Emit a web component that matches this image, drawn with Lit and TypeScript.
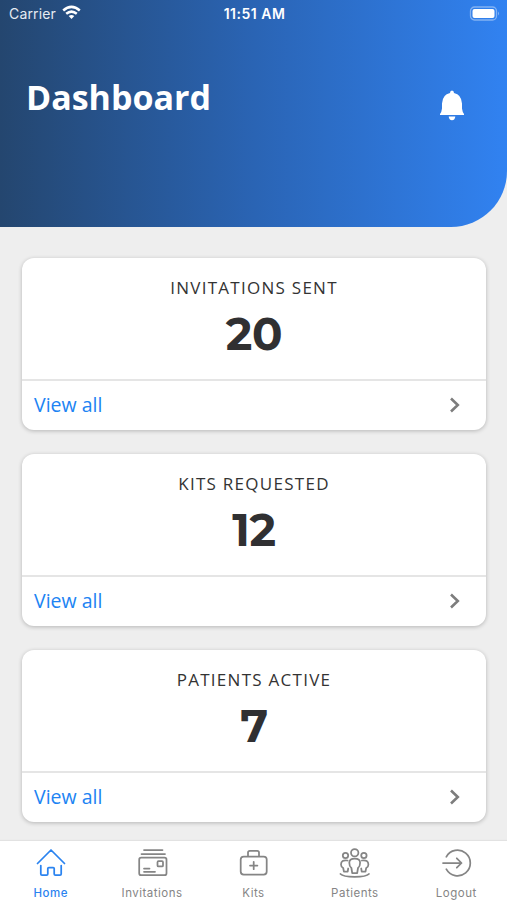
import { LitElement, html, css, svg } from "lit";
import { customElement, property } from "lit/decorators.js";

const icons: Record<string, unknown> = {
  Home: svg`<path d="M2.500 15.500 16 2 29.500 15.500M5.800 17.500V26q0 1.200 1.200 1.200H11.600q1.200 0 1.200-1.200V20.500q0-1 1-1h4.400q1 0 1 1V26q0 1.200 1.200 1.200H25q1.200 0 1.200-1.200V17.500"/>`,
  Invitations: svg`<path d="M7 2H25.500M4.500 6H28"/><rect x="2.200" y="9.700" width="27.300" height="17.500" rx="2"/><rect x="20.500" y="13.200" width="5.500" height="5.200" rx="1"/><path d="M7 20.600H12.500M7 23.800H18"/>`,
  Kits: svg`<rect x="2.700" y="8.500" width="26" height="18" rx="3"/><path d="M10 8V4.600Q10 2.800 11.800 2.800H19.200Q21 2.800 21 4.600V8M15.700 13.800V21.200M12 17.500H19.400"/>`,
  Patients: svg`<circle cx="15.700" cy="4.700" r="3.700"/><circle cx="6.500" cy="7.500" r="2.700"/><circle cx="24.900" cy="7.500" r="2.700"/><path d="M13.200 25 12.400 20Q10.300 18.500 10.300 14.700 10.300 10.700 15.700 10.700T21.100 14.700Q21.100 18.500 19 20L18.200 25ZM8.500 12.500Q2 11.500 2 16.500 2 19 4.200 20L4.900 23.500H8.700L9.200 20.500M22.900 12.500Q29.400 11.500 29.400 16.500 29.400 19 27.200 20L26.500 23.500H22.700L22.200 20.500M1.500 26Q4 28.800 15.700 28.800T29.900 26"/>`,
  Logout: svg`<path d="M5.300 8.800A12.800 12.800 0 1 1 5.300 21.200M2 15H20.500M15.800 10.300 20.500 15 15.800 19.700"/>`,
};

@customElement("stat-card")
class StatCard extends LitElement {
  @property() label = "";
  @property() value = "";
  static styles = css`
    :host { display: flex; flex-direction: column; height: 172px; border-radius: 12px; background: #fff; box-shadow: 0 1px 4px rgba(0,0,0,.24); font-family: "Open Sans", "Noto Sans", sans-serif; overflow: hidden; }
    .summary { box-sizing: border-box; height: 123px; padding-top: 18px; border-bottom: 2px solid #e5e5e5; text-align: center; color: #333; }
    .label { font-size: 17px; line-height: 24px; letter-spacing: 1.27px; }
    .value { font: 700 45px/52px Montserrat, Inter, sans-serif; margin-top: 8px; color: #303032; letter-spacing: -.3px; }
    .more { flex: 1; display: flex; align-items: center; justify-content: space-between; padding: 0 25px 2px 12px; color: #2083f3; font-size: 19.500px; }
    svg { width: 12px; height: 18px; fill: none; stroke: #7d7d7d; stroke-width: 2.600; }
  `;
  render() {
    return html`<div class="summary"><div class="label">${this.label}</div><div class="value">${this.value}</div></div>
      <div class="more"><span>View all</span><svg viewBox="0 0 12 18"><path d="M2 2.500 8.800 9 2 15.500"/></svg></div>`;
  }
}

@customElement("app-root")
class AppRoot extends LitElement {
  static styles = css`
    :host { display: flex; flex-direction: column; height: 900px; background: #eee; font-family: "Open Sans", "Noto Sans", sans-serif; overflow: hidden; }
    header { height: 227px; flex: none; background: linear-gradient(90deg, #24466f, #2a64b4 50%, #3182f1); border-bottom-right-radius: 56px; color: #fff; }
    .status { display: grid; grid-template-columns: 1fr auto 1fr; align-items: center; height: 27px; padding: 0 7px 0 9px; font: 500 14px/26px Inter, sans-serif; }
    .carrier { display: flex; align-items: center; gap: 6px; font-weight: 400; color: #e6ebf2; letter-spacing: .15px; }
    .carrier svg { width: 19px; height: 15px; margin-top: -2px; }
    .time { font-weight: 600; font-size: 14px; letter-spacing: .5px; }
    .battery { justify-self: end; width: 31px; height: 15px; margin-top: -1px; }
    .title { display: flex; justify-content: space-between; align-items: center; padding: 0 42px 0 26px; height: 60px; margin-top: 39px; }
    h1 { margin: 2px 0 0; font-size: 34px; line-height: 60px; font-weight: 700; }
    .bell { width: 26px; height: 32px; margin-top: 17px; fill: #fff; }
    main { flex: 1; display: flex; flex-direction: column; gap: 24px; padding: 31px 21px 0 22px; }
    nav { height: 59px; flex: none; display: grid; grid-template-columns: repeat(5, 1fr); background: #fff; box-shadow: 0 -1px 1px #e2e2e2; }
    .tab { display: flex; flex-direction: column; align-items: center; color: #858585; font: 400 11.500px/16px Inter, sans-serif; letter-spacing: .5px; padding-top: 7px; }
    .tab svg { width: 31px; height: 31px; fill: none; stroke: currentColor; stroke-width: 1.750; stroke-linecap: round; stroke-linejoin: round; margin-bottom: 6px; }
    .active { color: #2a83f0; font-weight: 500; }
  `;
  render() {
    return html`
      <header>
        <div class="status">
          <div class="carrier"><span>Carrier</span><svg viewBox="0 0 19 15" fill="none" stroke="#fff" stroke-width="2.500"><path d="M1.200 5.500Q9.500-1.800 17.800 5.500M4.200 8.800Q9.500 4.400 14.800 8.800"/><path d="M6.700 11Q9.500 8.800 12.300 11L9.500 14Z" fill="#fff" stroke="none"/></svg></div>
          <span class="time">11:51 AM</span>
          <svg class="battery" viewBox="0 0 31 15"><rect x="1.500" y="1" width="26" height="13" rx="4" fill="none" stroke="#fff" stroke-opacity=".4" stroke-width="1.300"/><rect x="3.500" y="3" width="22" height="9" rx="2" fill="#fff"/><path d="M29 5.500Q31 7.500 29 9.500Z" fill="#fff" opacity=".4"/></svg>
        </div>
        <div class="title"><h1>Dashboard</h1><svg class="bell" viewBox="0 0 26 32"><path d="M13 1.500q2 0 2 2.500 7.500 1.500 8 10.500v5q.5 4 2 5.500v1H1v-1q1.500-1.500 2-5.500v-5q.5-9 8-10.500 0-2.500 2-2.500M9.700 27.500h6.600q-.3 3.700-3.300 3.700t-3.300-3.700"/></svg></div>
      </header>
      <main>
        <stat-card label="INVITATIONS SENT" value="20"></stat-card>
        <stat-card label="KITS REQUESTED" value="12"></stat-card>
        <stat-card label="PATIENTS ACTIVE" value="7"></stat-card>
      </main>
      <nav>${Object.entries(icons).map(([name, icon]) => html`<div class="tab ${name === "Home" ? "active" : ""}"><svg viewBox="0 0 31 31">${icon}</svg><span>${name}</span></div>`)}</nav>`;
  }
}
